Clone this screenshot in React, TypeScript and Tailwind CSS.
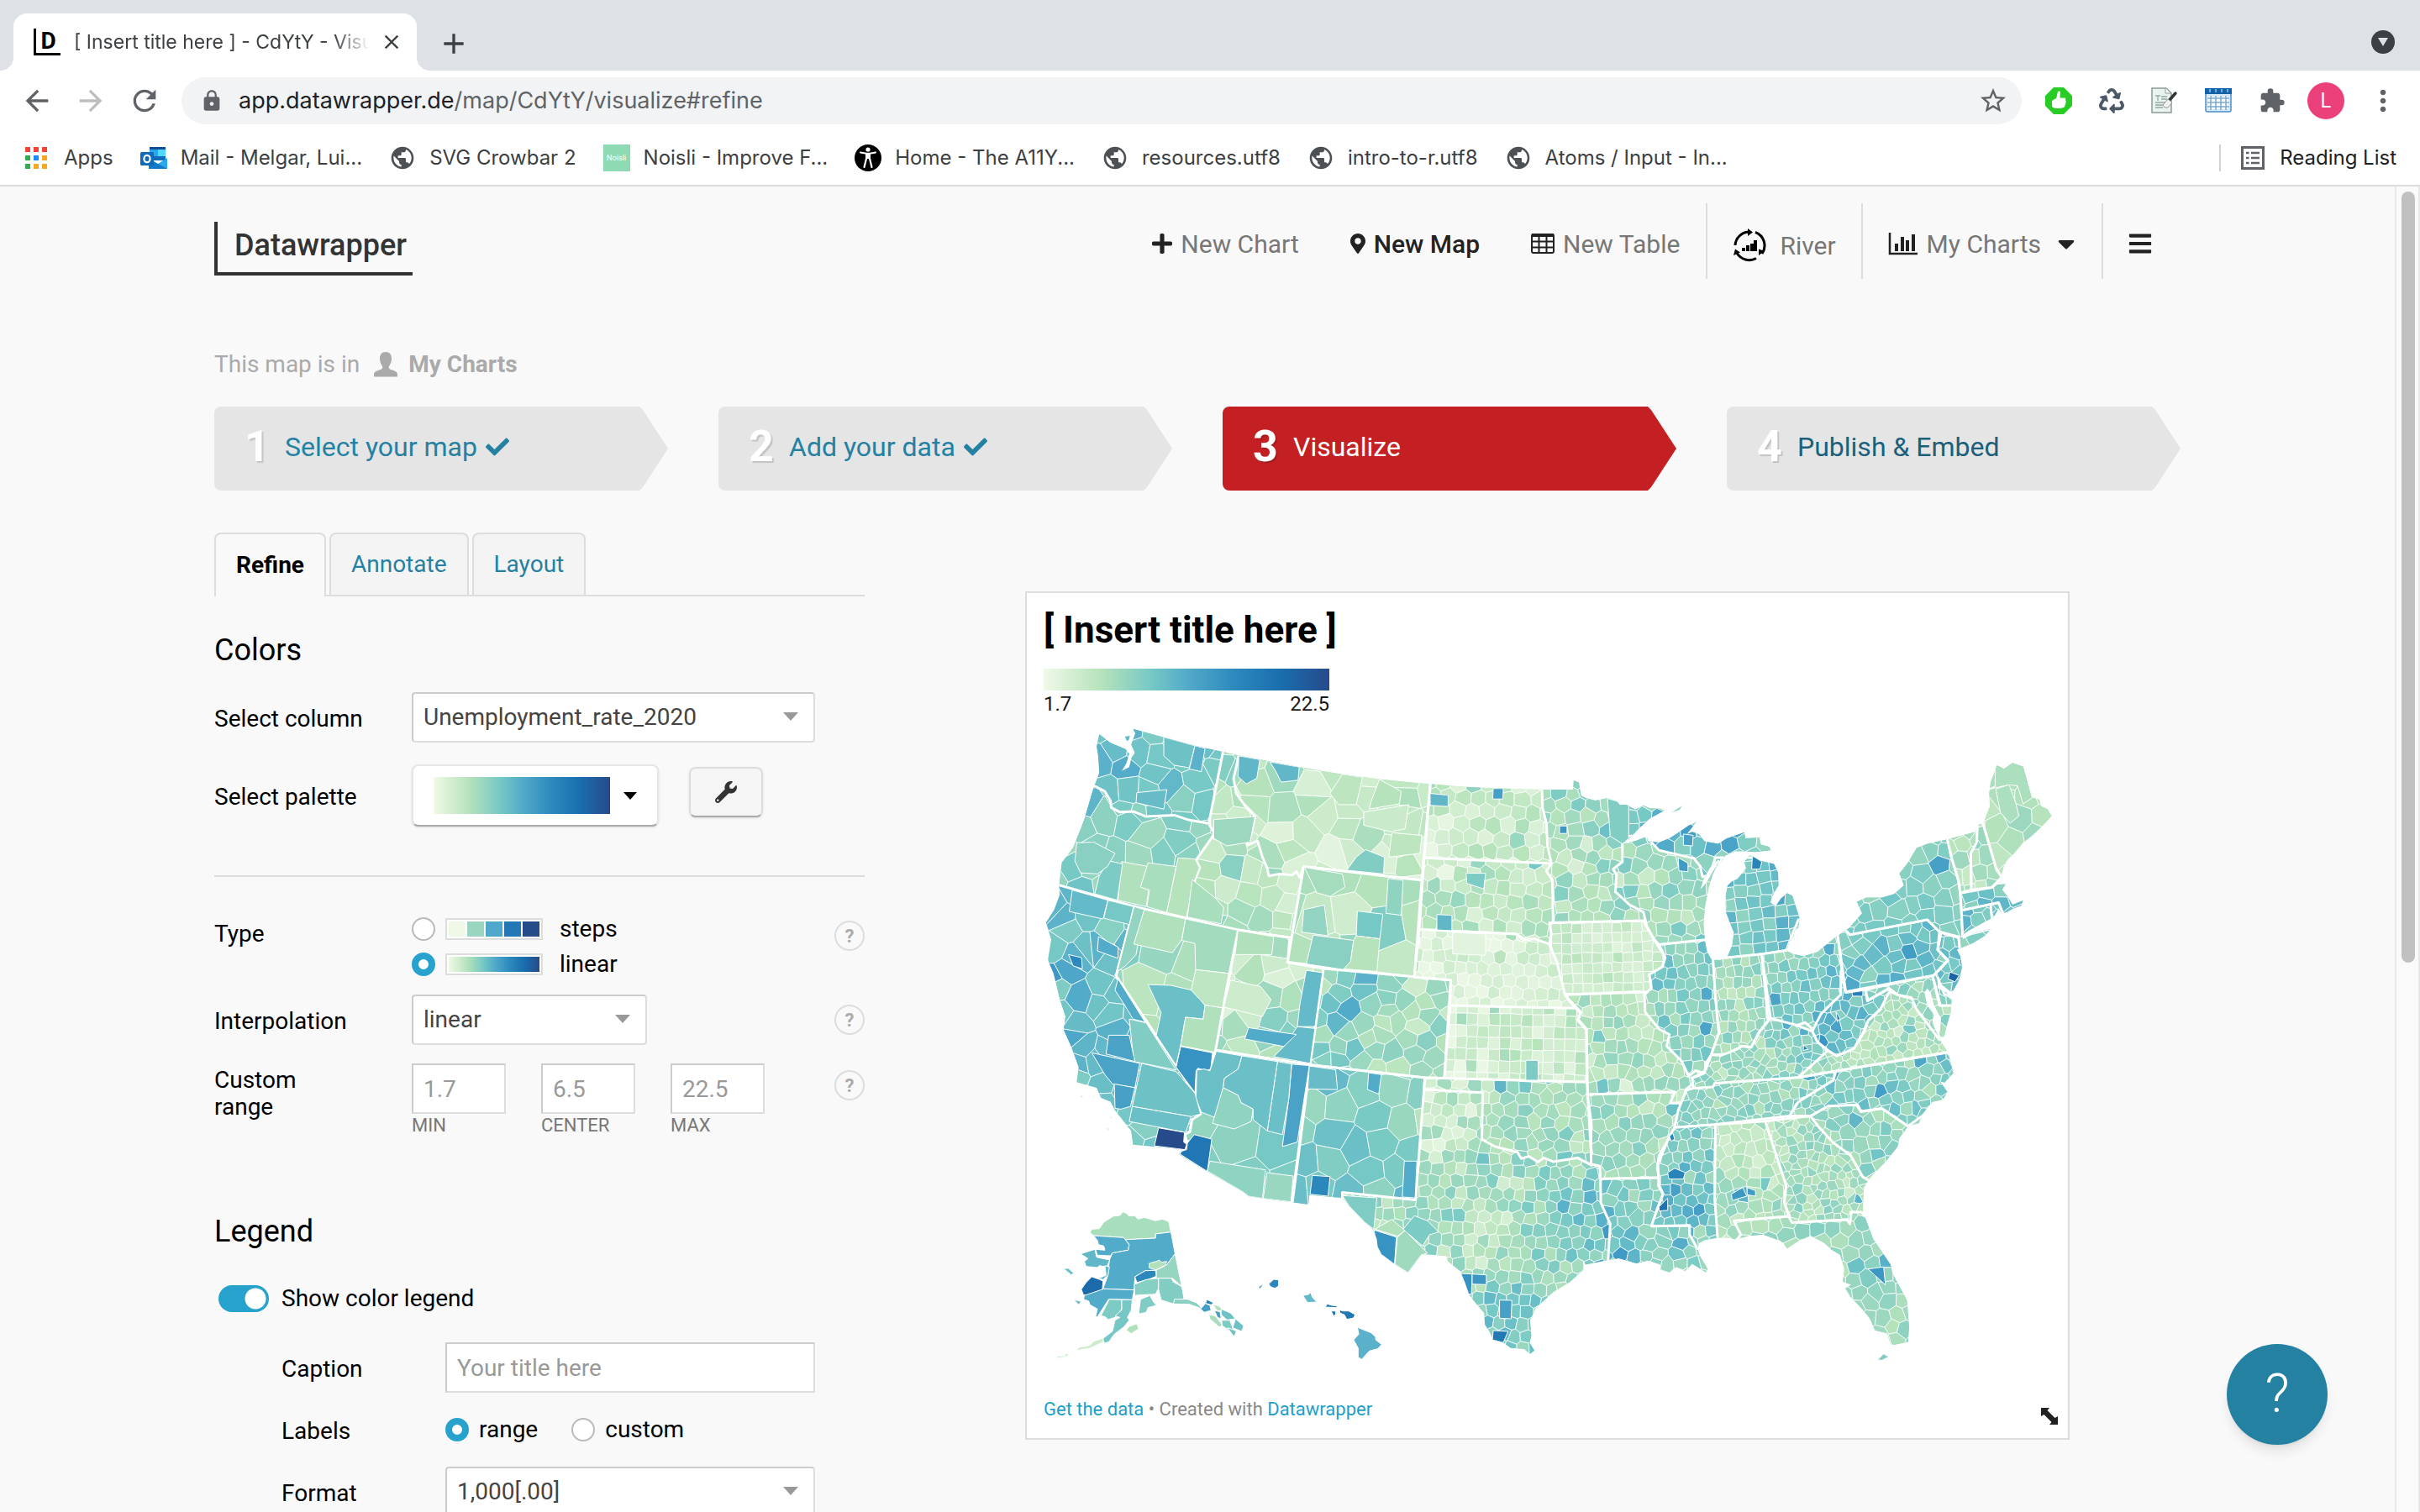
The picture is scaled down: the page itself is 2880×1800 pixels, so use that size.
import React from "react";
import { FaBars, FaCaretDown, FaCheck, FaMapMarkerAlt, FaPlus, FaRecycle, FaWrench } from "react-icons/fa";
import { MdAdd, MdArrowBack, MdArrowForward, MdClose, MdExtension, MdLock, MdMoreVert, MdPublic, MdRefresh, MdStarBorder } from "react-icons/md";

/* ------------------------------------------------------------------ */
/* Choropleth map                                                      */
/* ------------------------------------------------------------------ */

type Pt = [number, number];

// Each survey sheet has its own origin and scale; everything is converted to map units.
const SHEETS: Record<string, (x: number, y: number) => Pt> = {
  W: (x, y) => [1210 + x / 2.24, 690 + y / 2.24],
  E: (x, y) => [1850 + x / 2.4123, 850 + y / 1.96],
  S: (x, y) => [1210 + x / 2.24, 1350 + y / 3],
};

function shape(...parts: string[]): Pt[] {
  return parts.flatMap((part) => {
    const convert = SHEETS[part[0]];
    return part
      .slice(2)
      .trim()
      .split(/\s+/)
      .map((pair) => {
        const [x, y] = pair.split(",").map(Number);
        return convert(x, y);
      });
  });
}

const toPath = (pts: Pt[]) => "M" + pts.map(([x, y]) => `${x.toFixed(1)},${y.toFixed(1)}`).join("L") + "Z";

const COUNTRY = shape(
  "W:213,445 220,412 250,435 290,452 300,465 292,490 280,510 300,500 306,475 315,462 305,440 316,410 310,398 390,420 475,443 550,459 592,469 675,485 753,500 868,519 967,532 1055,541 1102,545 1190,552 1268,556 1397,560 1483,560",
  "E:55,155 70,160 76,190 90,196 117,202 152,196 180,205 188,213 205,211 232,223 255,213 275,220 303,220 317,225 275,243 245,265 215,290 195,303 230,297 265,286 268,297 300,300 330,290 355,277 385,260 410,250 395,265 380,280 395,275 415,280 430,297 470,303 495,290 545,276 548,290 588,288 592,305 617,310 620,318 575,322 550,320 520,320 490,330 480,345 470,340 455,350 445,360 428,385 418,410 435,395 452,370 472,345 455,375 443,405 432,450 428,490 432,530 438,555 450,572 475,574 497,565 510,540 515,510 505,490 492,462 490,430 497,400 510,390 525,385 540,370 550,360 545,345 560,330 575,335 590,342 630,350 642,370 643,400 625,425 620,440 635,448 650,430 668,418 683,424 695,455 703,475 700,498 690,505 685,520 675,530 665,552 685,560 715,565 755,555 785,535 808,520 845,500 883,465 868,438 895,428 940,428 975,420 1003,400 990,372 1012,350 1040,312 1070,303 1125,293 1208,275 1215,257 1230,257 1250,215 1248,185 1252,160 1270,120 1290,128 1315,114 1345,123 1370,195 1392,200 1397,215 1415,222 1427,238 1405,258 1383,275 1362,290 1345,300 1320,325 1300,340 1290,355 1283,375 1285,388 1270,398 1295,397 1285,410 1300,425 1315,445 1345,435 1340,447 1315,455 1300,462 1285,465 1275,455 1260,475 1235,485 1190,505 1172,515 1172,525 1215,508 1252,502 1235,518 1200,535 1170,545 1155,550 1165,565 1170,590 1162,620 1145,645 1137,648 1110,630 1105,615 1098,610 1100,640 1125,650 1140,665 1138,695 1125,730 1118,755 1105,752 1110,710 1090,680 1080,650 1070,640 1062,650 1070,680 1088,700 1085,720 1100,750 1112,768 1130,790 1145,838 1120,860 1108,858 1128,882 1115,900 1085,905 1055,935 1047,955 1015,962 990,990 985,1010 950,1045 905,1083 888,1105 885,1160 915,1225 965,1285 970,1305 1012,1368 1018,1430 1015,1465 975,1472 965,1470 955,1445 920,1438 905,1410 885,1390 850,1360 835,1340 852,1332 828,1325 832,1295 820,1262 795,1250 775,1235 735,1217 700,1230 668,1247 650,1230 600,1215 560,1217 520,1226 495,1222 470,1222 430,1228 415,1235 410,1247 418,1265 440,1295 435,1303 395,1283 375,1300 350,1290 330,1303 305,1297 305,1285 270,1275 235,1282 185,1270 148,1275 90,1285 80,1275 85,1295 45,1325",
  "S:1430,565 1385,620 1368,665 1372,720 1367,745 1380,773 1368,786 1353,768 1317,764 1297,745 1270,735 1262,710 1248,680 1246,640 1215,590 1205,570 1195,530 1182,490 1150,455 1145,436 1095,430 1078,432 1043,495 1007,465 972,430 962,405 960,375 950,342 930,318 888,260 868,228 780,218 778,252 730,243 657,230 618,222 605,208 505,132 432,72 440,55 367,45 310,38",
  "W:305,1470 262,1415 250,1392 225,1382 213,1355 160,1340 165,1300 145,1245 125,1200 130,1165 115,1120 105,1078 98,1050 83,1015 92,960 78,915 100,880 115,840 113,815 120,755 150,715 180,640 205,555 220,552 208,548 220,515 217,470",
);

type State = { id: string; pts: Pt[]; w: number; h: number; jitter: number; value: number; spread: number };

const state = (id: string, w: number, h: number, jitter: number, value: number, spread: number, outline: string): State => ({
  id, w, h, jitter, value, spread, pts: shape(outline),
});

// Painted in order, so a later state trims the loose edge of an earlier one.
const STATES: State[] = [
  state("WA", 30, 26, 0.8, 0.4, 0.06, "W:150,380 560,380 560,660 150,660"),
  state("OR", 32, 28, 0.8, 0.34, 0.08, "W:150,560 210,552 235,565 250,590 252,608 275,620 310,618 345,632 420,628 455,640 512,650 560,650 560,920 450,920 90,810"),
  state("CA", 28, 24, 0.85, 0.4, 0.07, "W:90,808 313,872 265,1057 475,1370 490,1425 467,1440 462,1470 450,1480 445,1500 455,1505 450,1520 430,1580 200,1600 0,1500 0,785"),
  state("NV", 46, 50, 0.3, 0.22, 0.08, "W:313,872 590,934 527,1255 520,1305 510,1315 500,1303 480,1305 478,1360 475,1370 265,1057"),
  state("ID", 26, 24, 0.85, 0.24, 0.1, "W:550,459 512,650 527,678 478,748 488,768 475,800 452,903 590,934 728,955 800,955 800,400 560,400"),
  state("MT", 34, 28, 0.85, 0.19, 0.1, "W:592,469 578,530 585,570 610,605 635,632 625,680 612,695 615,708 642,697 655,740 668,770 672,790 700,785 735,788 745,778 755,795 765,765 1080,802 1102,545 1104,500 592,420"),
  state("WY", 42, 46, 0.5, 0.25, 0.09, "W:765,765 1080,802 1060,1060 722,1020"),
  state("UT", 34, 22, 0.7, 0.2, 0.1, "W:590,934 728,955 722,1020 818,1037 782,1294 530,1255"),
  state("AZ", 52, 50, 0.4, 0.32, 0.07, "W:530,1255 782,1294 733,1660 600,1700 400,1560 435,1530 455,1505 448,1480 462,1472 467,1440 490,1425 475,1385 478,1305 500,1303 510,1315 520,1305"),
  state("CO", 24, 17, 0.7, 0.31, 0.11, "W:818,1037 1157,1068 1140,1330 1088,1328 782,1294"),
  state("TX", 14, 14, 0.35, 0.27, 0.1, "W:840,1600 1060,1340 1750,1340 1750,2250 840,2250"),
  state("NM", 36, 32, 0.5, 0.37, 0.08, "W:782,1294 1088,1328 1063,1654 868,1634 868,1700 730,1700"),
  state("MN", 17, 15, 0.45, 0.26, 0.1, "E:-60,100 330,100 330,500 -30,500"),
  state("WI", 17, 16, 0.4, 0.26, 0.11, "E:195,285 195,345 168,362 178,375 175,415 215,445 255,462 265,495 285,525 300,538 480,530 500,280"),
  state("MI", 15, 14, 0.2, 0.41, 0.08, "E:480,300 750,300 750,546 665,552 600,560 470,572 490,450 480,340"),
  state("MU", 20, 18, 0.5, 0.4, 0.1, "E:270,292 300,318 400,337 418,355 425,380 445,375 462,335 660,335 650,240 350,230 262,285"),
  state("IA", 12, 12, 0.15, 0.13, 0.06, "E:-14,487 255,482 265,497 285,525 318,568 310,590 272,608 278,640 260,655 245,648 28,655 10,600 -10,560"),
  state("MO", 14, 15, 0.45, 0.2, 0.1, "E:28,655 300,648 420,840 398,850 395,865 378,875 365,908 332,908 345,882 95,888 92,735 65,710 75,695"),
  state("ND", 18, 16, 0.25, 0.17, 0.09, "W:1103,545 1104,480 1397,500 1400,560 1402,610 1412,650 1415,710 1425,757 1086,742"),
  state("SD", 17, 16, 0.35, 0.18, 0.1, "W:1086,742 1425,757 1412,778 1428,800 1430,915 1420,915 1425,945 1420,972 1350,958 1330,945 1073,933"),
  state("NE", 14, 14, 0.25, 0.08, 0.06, "W:1073,933 1330,945 1355,960 1380,958 1420,972 1440,1020 1450,1060 1462,1108 1490,1145 1155,1136 1157,1068 1060,1060"),
  state("KS", 13, 14, 0.12, 0.13, 0.08, "W:1155,1136 1490,1143 1503,1155 1495,1175 1518,1200 1520,1340 1140,1330"),
  state("OK", 16, 14, 0.5, 0.27, 0.1, "W:1088,1328 1520,1340 1533,1562 1495,1542 1430,1552 1405,1542 1390,1553 1365,1538 1345,1544 1335,1527 1275,1512 1240,1493 1242,1368 1086,1360"),
  state("AR", 16, 15, 0.5, 0.26, 0.08, "E:95,888 345,882 332,908 365,908 350,945 345,965 330,990 300,1030 295,1060 300,1082 132,1085 130,1055 105,1050 105,950"),
  state("LA", 16, 14, 0.65, 0.31, 0.08, "E:132,1085 300,1082 298,1100 312,1120 295,1155 280,1195 388,1193 388,1215 412,1245 480,1330 150,1330 155,1255 160,1190 133,1140"),
  state("IL", 13, 14, 0.35, 0.33, 0.09, "E:300,538 318,568 310,590 272,608 278,640 258,655 260,695 300,735 330,748 322,775 365,810 385,845 405,832 430,838 435,815 450,795 472,745 462,660 455,572 455,525"),
  state("IN", 11, 13, 0.3, 0.24, 0.08, "E:455,572 595,560 613,715 585,745 565,778 535,775 515,795 450,795 472,745 462,660"),
  state("OH", 12, 13, 0.3, 0.31, 0.08, "E:595,560 665,552 700,480 808,480 825,600 822,655 780,690 765,720 745,738 720,720 690,728 620,710"),
  state("KY", 11, 10, 0.75, 0.28, 0.09, "E:450,795 475,797 500,790 540,775 565,778 590,740 620,710 690,725 740,740 755,765 785,785 745,820 700,848 460,862 455,872 400,875 395,850 430,838"),
  state("TN", 11, 12, 0.7, 0.32, 0.08, "E:400,873 455,870 460,862 700,848 808,833 800,855 740,885 695,910 675,938 460,958 345,965 355,925 378,878"),
  state("MS", 13, 13, 0.35, 0.36, 0.08, "E:345,965 462,958 460,1130 472,1230 480,1260 410,1247 388,1215 388,1193 278,1195 295,1155 312,1120 300,1100 297,1050 330,985"),
  state("AL", 14, 14, 0.6, 0.22, 0.08, "E:462,958 605,950 665,1100 660,1140 672,1172 518,1183 535,1215 520,1240 470,1240 460,1130"),
  state("GA", 10, 10, 0.75, 0.24, 0.08, "E:605,950 735,938 760,965 850,1030 885,1080 920,1085 900,1165 850,1162 850,1190 840,1180 680,1187 660,1140 665,1100"),
  state("FL", 18, 16, 0.5, 0.27, 0.06, "E:515,1183 672,1172 682,1187 840,1180 848,1190 852,1162 880,1162 1050,1300 1050,1500 900,1500 700,1280 500,1250 535,1215"),
  state("SC", 15, 14, 0.75, 0.28, 0.09, "E:735,938 785,915 865,910 880,928 940,920 1015,962 1020,1000 905,1090 885,1080 850,1030 800,1000 760,965"),
  state("NC", 13, 13, 0.7, 0.32, 0.08, "E:675,938 700,905 740,885 800,855 808,833 1128,790 1200,850 1015,962 940,920 880,927 870,912 785,915 735,938"),
  state("VA", 11, 10, 0.75, 0.22, 0.08, "E:700,848 785,785 810,798 860,780 890,740 900,715 935,690 955,645 985,655 1030,665 1100,740 1180,782 808,833"),
  state("WV", 13, 12, 0.75, 0.42, 0.09, "E:822,600 836,650 892,643 898,670 950,645 975,640 960,650 935,690 900,715 885,745 860,780 810,798 785,785 755,765 740,740 765,700 800,672 822,655"),
  state("MD", 14, 12, 0.7, 0.28, 0.08, "E:892,643 1085,610 1105,680 1150,678 1130,760 1105,760 1040,690 1025,662 985,655 960,640 900,668"),
  state("DE", 16, 14, 0.5, 0.36, 0.06, "E:1085,610 1098,605 1110,640 1160,680 1108,680"),
  state("PA", 18, 15, 0.7, 0.38, 0.07, "E:810,500 845,497 848,515 1070,480 1105,508 1100,550 1128,575 1088,610 836,648"),
  state("NJ", 14, 13, 0.6, 0.4, 0.06, "E:1110,510 1160,522 1165,550 1200,560 1180,650 1120,655 1095,605 1130,575 1100,550"),
  state("NY", 20, 19, 0.7, 0.35, 0.05, "E:848,515 820,490 980,250 1128,285 1138,330 1160,390 1165,420 1168,460 1172,515 1280,480 1270,520 1165,560 1160,520 1105,508 1070,480"),
  state("CT", 18, 16, 0.4, 0.4, 0.06, "E:1168,458 1252,443 1260,500 1172,518"),
  state("RI", 10, 12, 0.4, 0.42, 0.06, "E:1252,443 1275,440 1290,470 1258,500"),
  state("MA", 18, 16, 0.4, 0.4, 0.08, "E:1165,418 1255,405 1285,385 1400,380 1400,500 1290,470 1275,440 1168,458"),
  state("VT", 16, 18, 0.5, 0.22, 0.07, "E:1125,285 1215,265 1212,300 1195,325 1197,410 1165,418 1160,390 1140,335"),
  state("NH", 16, 20, 0.5, 0.26, 0.08, "E:1215,245 1230,255 1270,365 1285,380 1255,405 1197,410 1195,325 1212,300"),
  state("ME", 26, 28, 0.6, 0.22, 0.05, "E:1230,255 1230,100 1450,100 1450,320 1290,390 1268,360"),
];

// Regional highs and lows: x, y, radius, change in value.
const REGIONS: [number, number, number, number][] = [
  [1318, 1240, 60, 0.1], [1310, 920, 60, 0.05], [1280, 1130, 50, 0.05], [1430, 1120, 70, -0.04],
  [1550, 1120, 70, -0.06], [1570, 1215, 50, 0.1], [1500, 920, 40, 0.12], [1690, 1220, 60, -0.12], [1625, 1180, 40, 0.06],
  [1720, 1330, 60, -0.14], [1760, 1480, 70, -0.08], [1790, 1570, 50, 0.14], [1890, 1440, 50, 0.1], [1910, 1490, 50, 0.1],
  [1925, 940, 70, 0.07], [1850, 1020, 60, -0.06], [1960, 960, 50, 0.1], [2050, 970, 60, 0.08], [2000, 1090, 40, -0.06],
  [1990, 1430, 30, 0.1], [2060, 1420, 25, 0.14], [2070, 1350, 40, -0.06], [2140, 1210, 50, 0.08], [2180, 1160, 50, 0.05],
  [2120, 1070, 60, 0.02], [2275, 1125, 50, 0.03], [2240, 1330, 40, 0.05], [2240, 1530, 40, 0.05], [2160, 1260, 40, 0.05],
  [2340, 1290, 50, 0.03], [1690, 1020, 50, -0.07], [2010, 1130, 40, 0.05], [1640, 950, 50, -0.05], [1340, 1010, 40, -0.05],
];

const STOPS: [number, number, number, number][] = [
  [0, 240, 249, 232], [0.2, 182, 227, 187], [0.4, 117, 200, 197], [0.5, 83, 171, 202], [0.66, 46, 139, 190], [0.83, 26, 110, 174], [1, 38, 74, 138],
];

function ramp(value: number) {
  const v = Math.min(1, Math.max(0.02, value));
  let i = 1;
  while (i < STOPS.length - 1 && STOPS[i][0] < v) i++;
  const [a, b] = [STOPS[i - 1], STOPS[i]];
  const t = (v - a[0]) / (b[0] - a[0]);
  return `rgb(${[1, 2, 3].map((k) => Math.round(a[k] + (b[k] - a[k]) * t)).join(",")})`;
}

function random(seed: number) {
  let s = seed >>> 0;
  return () => {
    s = (s + 0x6d2b79f5) >>> 0;
    let t = s;
    t = Math.imul(t ^ (t >>> 15), t | 1);
    t ^= t + Math.imul(t ^ (t >>> 7), t | 61);
    return ((t ^ (t >>> 14)) >>> 0) / 4294967296;
  };
}

function inside([x, y]: Pt, poly: Pt[]) {
  let hit = false;
  for (let i = 0, j = poly.length - 1; i < poly.length; j = i++) {
    const [xi, yi] = poly[i];
    const [xj, yj] = poly[j];
    if (yi > y !== yj > y && x < ((xj - xi) * (y - yi)) / (yj - yi) + xi) hit = !hit;
  }
  return hit;
}

// Keep the part of a cell that lies nearer to a than to b.
function cut(cell: Pt[], a: Pt, b: Pt): Pt[] {
  const nx = b[0] - a[0];
  const ny = b[1] - a[1];
  const c = (nx * (a[0] + b[0]) + ny * (a[1] + b[1])) / 2;
  const out: Pt[] = [];
  cell.forEach((p, i) => {
    const q = cell[(i + 1) % cell.length];
    const dp = nx * p[0] + ny * p[1] - c;
    const dq = nx * q[0] + ny * q[1] - c;
    if (dp <= 0) out.push(p);
    if (dp * dq < 0) {
      const t = dp / (dp - dq);
      out.push([p[0] + (q[0] - p[0]) * t, p[1] + (q[1] - p[1]) * t]);
    }
  });
  return out;
}

function counties(s: State, seed: number) {
  const rnd = random(seed * 7919 + 13);
  const xs = s.pts.map((p) => p[0]);
  const ys = s.pts.map((p) => p[1]);
  const cx = (Math.min(...xs) + Math.max(...xs)) / 2;
  const cy = (Math.min(...ys) + Math.max(...ys)) / 2;
  const r = Math.hypot(Math.max(...xs) - cx, Math.max(...ys) - cy);
  const angle = ((1860 - cx) * 0.026 * Math.PI) / 180;
  const [cos, sin] = [Math.cos(angle), Math.sin(angle)];
  const nx = Math.ceil(r / s.w) + 2;
  const ny = Math.ceil(r / s.h) + 2;
  const grid: Pt[][] = [];
  for (let j = -ny; j <= ny; j++) {
    const row: Pt[] = [];
    for (let i = -nx; i <= nx; i++) {
      const offset = s.jitter > 0.2 && j % 2 ? 0.3 : 0;
      const u = (i + offset + (rnd() - 0.5) * s.jitter) * s.w;
      const v = (j + (rnd() - 0.5) * s.jitter) * s.h;
      row.push([cx + u * cos - v * sin, cy + u * sin + v * cos]);
    }
    grid.push(row);
  }
  const cells: { d: string; fill: string }[] = [];
  for (let j = 2; j < grid.length - 2; j++) {
    for (let i = 2; i < grid[j].length - 2; i++) {
      const p = grid[j][i];
      const noise = (rnd() + rnd() - 1) * s.spread * 1.5;
      const spike = rnd() > 0.98 ? 0.15 : 0;
      const m = 3 * Math.max(s.w, s.h);
      if (p[0] < Math.min(...xs) - m || p[0] > Math.max(...xs) + m || p[1] < Math.min(...ys) - m || p[1] > Math.max(...ys) + m) continue;
      let cell: Pt[] = [[p[0] - m, p[1] - m], [p[0] + m, p[1] - m], [p[0] + m, p[1] + m], [p[0] - m, p[1] + m]];
      for (let dj = -2; dj <= 2; dj++) for (let di = -2; di <= 2; di++) if (di || dj) cell = cut(cell, p, grid[j + dj][i + di]);
      if (!cell.some((q) => inside(q, COUNTRY)) && !inside(p, COUNTRY)) continue;
      let value = s.value + noise + spike;
      for (const [x, y, radius, change] of REGIONS) {
        const d = Math.hypot(p[0] - x, p[1] - y) / radius;
        if (d < 1.6) value += change * Math.exp(-d * d * 1.2);
      }
      cells.push({ d: toPath(cell), fill: ramp(value) });
    }
  }
  return cells;
}

const DISTRICTS: [number, string][] = [
  [1, "W:378,1462 447,1474 445,1500 453,1506 448,1520 367,1510"],
  [0.78, "W:473,1480 520,1492 508,1578 435,1532 440,1524 453,1520 455,1503"],
  [0.62, "W:437,1245 522,1262 517,1305 505,1310 483,1303 478,1310 475,1368 425,1300"],
  [0.43, "W:350,1080 410,1082 467,1095 502,1135 497,1172 450,1167 437,1240 425,1295 372,1215 385,1155"],
  [0.31, "W:340,880 313,872 268,1045 290,1030 318,1000"],
  [0.22, "W:340,880 450,905 440,960 415,995 312,972"],
  [0.26, "W:450,905 588,935 565,1050 477,1040 475,970 440,962"],
  [0.17, "W:565,1050 477,1040 465,1095 502,1135 548,1142"],
  [0.22, "W:450,1167 497,1172 502,1135 548,1142 527,1260 437,1243"],
  [0.54, "W:733,1292 780,1296 748,1500 708,1512 725,1385"],
  [0.43, "W:695,1285 733,1292 725,1385 708,1480 668,1470"],
  [0.43, "W:600,1270 695,1285 668,1470 630,1440 630,1412 598,1395 590,1375 550,1355 553,1330 590,1305"],
  [0.43, "W:532,1258 600,1270 590,1305 553,1330 550,1355 530,1435 492,1420 478,1385 480,1308 500,1305 515,1310"],
  [0.32, "W:550,1355 590,1375 598,1395 630,1412 625,1445 580,1465 522,1450"],
  [0.42, "W:333,1290 425,1312 475,1370 490,1425 465,1432 308,1405"],
  [0.43, "W:308,1405 465,1432 450,1474 300,1445"],
  [0.54, "W:200,1262 328,1290 315,1355 255,1345 235,1320"],
  [0.55, "W:260,1345 315,1355 303,1405 278,1412 262,1410"],
  [0.36, "W:300,1172 345,1182 425,1308 312,1285"],
  [0.54, "W:245,1215 300,1215 315,1285 238,1265"],
  [0.5, "W:270,1065 342,1180 310,1172 285,1130 262,1095"],
  [0.22, "W:280,752 350,765 330,820 352,828 345,872 270,855"],
  [0.24, "W:350,755 425,765 400,888 347,872 354,828 330,820"],
  [0.2, "W:430,742 475,745 487,768 472,808 452,900 400,888"],
  [0.38, "W:245,750 282,758 268,855 208,838 220,790"],
  [0.34, "W:160,702 205,700 262,730 242,765 215,785 170,782 155,750"],
  [0.45, "W:148,828 243,855 230,905 140,885"],
  [0.4, "W:243,855 311,872 300,920 232,903"],
  [0.42, "W:392,420 475,443 460,502 420,495 392,470"],
  [0.24, "W:468,800 530,850 552,875 545,918 455,900"],
  [0.28, "W:525,640 635,632 622,700 560,710 525,690"],
  [0.45, "W:748,1192 795,1197 782,1290 685,1272 712,1245"],
  [0.5, "W:618,1195 745,1213 712,1245 608,1225"],
  [0.45, "W:772,1042 815,1048 795,1192 748,1192 755,1130"],
  [0.22, "W:590,936 685,952 680,1000 582,1000"],
  [0.12, "W:570,1068 650,1085 678,1120 655,1165 552,1140"],
  [0.34, "W:790,948 898,962 890,1018 872,1040 772,1025"],
  [0.4, "W:908,884 976,892 968,958 905,950"],
  [0.31, "W:765,880 820,868 830,950 760,940"],
  [0.25, "W:767,767 868,785 875,820 835,845 800,835"],
  [0.2, "W:905,950 968,958 960,1045 872,1038 890,1018 898,962"],
  [0.32, "W:990,797 1030,802 1025,895 984,890"],
  [0.46, "W:592,470 648,480 640,530 612,545 590,525"],
  [0.46, "W:675,486 753,500 750,535 705,540 690,510"],
  [0.18, "W:868,519 922,527 905,600 858,600 835,570"],
  [0.2, "W:967,533 1025,565 1020,598 940,612 945,590"],
  [0.13, "W:925,620 1045,600 1035,665 995,672 925,655"],
  [0.36, "W:930,720 980,740 978,785 880,775 905,740"],
  [0.18, "W:1000,675 1080,682 1075,730 992,740"],
  [0.48, "W:475,443 502,450 492,512 460,505"],
  [0.44, "W:320,568 400,560 392,612 318,595"],
  [0.56, "W:1270,557 1297,557 1296,585 1269,585"],
  [0.46, "W:1102,570 1150,575 1150,605 1102,602"],
  [0.46, "W:1120,893 1160,895 1160,936 1120,934"],
  [0.38, "W:1198,783 1250,783 1245,825 1200,810"],
  [0.05, "W:1162,941 1250,945 1250,1002 1162,998"],
  [0.6, "W:1447,657 1467,657 1467,677 1447,677"],
  [0.67, "W:138,1000 173,1008 175,1038 150,1030"],
  [0.5, "W:218,952 270,980 270,1010 215,990"],
  [0.5, "W:938,1315 972,1320 965,1372 935,1360"],
  [0.44, "W:780,1297 850,1307 855,1360 776,1358"],
  [0.38, "W:1357,1282 1390,1282 1390,1335 1357,1335"],
  [0.68, "S:788,148 835,152 830,222 782,215"],
  [0.5, "S:1033,97 1067,97 1062,228 1028,225"],
  [0.32, "S:515,97 663,128 655,230 618,222 605,208 508,132"],
  [0.29, "S:667,138 737,150 731,242 657,230"],
  [0.62, "S:952,343 1012,368 1007,465 972,430 962,405"],
  [0.22, "S:1000,305 1035,345 1015,365 955,340"],
  [0.27, "S:1015,368 1035,345 1095,425 1078,432 1043,495 1008,465"],
  [0.37, "S:868,220 960,228 952,340 930,318 888,260"],
  [0.38, "S:1060,292 1095,310 1125,350 1100,360 1082,400 1030,340"],
  [0.62, "S:1184,498 1214,500 1212,572 1205,572"],
  [0.6, "S:1214,500 1252,503 1252,538 1214,536"],
  [0.76, "S:1270,702 1310,705 1297,745 1268,735"],
  [0.55, "S:1287,593 1320,594 1318,660 1287,658"],
  [0.36, "E:152,197 213,212 213,290 195,303 160,285"],
  [0.7, "E:568,330 595,345 590,362 566,362"],
  [0.58, "E:355,335 383,348 383,368 357,366"],
  [0.55, "E:370,280 398,283 396,308 370,306"],
  [0.88, "E:1135,602 1162,610 1150,625 1130,618"],
  [0.6, "E:900,1295 945,1290 950,1332"],
  [0.7, "E:325,1070 345,1060 375,1070 370,1085 328,1085"],
  [0.8, "E:300,1150 325,1130 325,1158 300,1160"],
  [0.7, "E:330,985 340,978 345,992 335,997"],
  [0.6, "E:508,1120 540,1105 552,1125 510,1135"],
  [0.58, "E:553,1105 577,1112 577,1125 553,1122"],
  [0.72, "E:808,695 820,710 812,718"],
  [0.72, "E:715,772 728,782 714,785"],
  [0.23, "E:1250,175 1265,170 1265,100 1345,100 1372,195 1345,210 1330,168 1305,165"],
  [0.23, "E:1267,175 1305,165 1325,210 1333,238 1308,255 1280,230"],
];

const OUTLIERS: [number, string][] = [
  [0.24, "S:195,352 200,340 220,338 232,315 258,293 275,291 283,278 295,285 298,292 315,292 323,304 340,298 370,310 388,304 405,313 411,350 370,357 370,372 290,377 285,370 205,363"],
  [0.5, "S:205,363 285,370 300,395 297,415 255,425 250,435 215,433 210,412 235,415 232,400 218,395 215,380"],
  [0.5, "S:290,377 370,372 370,357 411,350 422,428 400,467 370,487 343,488 315,510 313,557 230,553 243,505 247,450 255,425 297,415 300,395"],
  [0.46, "S:170,428 208,412 213,440 248,450 240,475 220,470 215,477 185,473 180,455 190,445"],
  [0.43, "S:124,480 138,480 152,497 145,503"],
  [0.45, "S:235,470 247,475 243,505 230,520 218,515 238,505"],
  [0.85, "S:200,510 218,518 230,525 228,560 208,565 205,575 178,575 172,555 185,530"],
  [0.5, "S:180,577 232,553 313,557 308,592 245,590 215,653 210,653 215,625 195,610 192,597 178,590"],
  [0.38, "S:247,590 280,592 280,625 262,655 243,663 238,655 225,648"],
  [0.4, "S:280,592 308,592 305,630 295,655 300,665 285,690 260,715 245,743 232,747 230,730 255,705 262,665 275,655 262,650 280,628"],
  [0.68, "S:315,510 343,488 370,487 372,508 350,520 320,530"],
  [0.35, "S:313,538 345,520 378,515 378,550 370,572 325,575 315,577"],
  [0.22, "S:353,462 372,455 380,450 385,458 400,455 395,470 370,485 353,478"],
  [0.3, "S:422,428 440,545 428,530 415,515 372,515 372,487 400,467"],
  [0.36, "S:378,515 412,515 417,528 440,545 446,588 425,593 418,607 385,593 378,555"],
  [0.37, "S:330,590 355,577 365,600 372,612 350,620 345,637 325,643"],
  [0.22, "S:300,687 320,678 325,695 305,713 292,700"],
  [0.12, "S:228,730 232,742 195,765 160,773 165,762 195,755 205,740"],
  [0.12, "S:97,806 110,793 130,792 128,782 140,787 130,797 105,800"],
  [0.34, "S:420,590 455,590 480,603 495,625 460,608 418,607"],
  [0.7, "S:507,591 525,603 518,610 503,605"],
  [0.57, "S:503,605 515,612 518,630 500,637 490,625"],
  [0.22, "S:522,608 540,615 550,630 535,632"],
  [0.55, "S:527,630 542,635 545,660 535,655"],
  [0.24, "S:512,645 530,650 548,682 540,690 515,660"],
  [0.42, "S:545,625 570,640 583,660 560,664 545,645"],
  [0.38, "S:546,665 568,665 575,690 580,715 565,700 548,685"],
  [0.42, "S:583,660 605,685 600,705 576,692"],
  [0.42, "S:562,692 585,703 583,715 578,722"],
  [0.45, "S:152,592 172,598 165,610"],
  [0.6, "S:645,545 658,535 648,555"],
  [0.68, "S:672,535 685,519 698,521 698,543 688,551 676,545"],
  [0.45, "S:763,577 778,573 783,565 788,583 800,600 775,602"],
  [0.75, "S:828,607 840,612 857,614 850,620 822,618"],
  [0.78, "S:838,632 850,632 850,645 845,650"],
  [0.77, "S:860,628 870,632 885,632 902,645 898,657 880,662 873,645 862,640"],
  [0.48, "S:908,690 920,697 945,710 957,725 957,735 973,752 962,767 940,775 920,805 910,797 910,765 898,735 912,715"],
  [0.34, "E:335,230 368,212 360,224 340,230"],
  [0.36, "E:927,1507 945,1493 960,1500 940,1508"],
  [0.45, "W:287,418 303,415 300,428 293,432"],
  [0.45, "W:247,1427 256,1437 250,1435"],
  [0.45, "W:240,1455 247,1470 242,1467"],
  [0.36, "W:168,1375 180,1380 172,1381"],
];

function UnemploymentMap() {
  const states = React.useMemo(() => STATES.map((s, i) => ({ id: s.id, d: toPath(s.pts), cells: counties(s, i + 1) })), []);
  return (
    <svg viewBox="1222 862 1239 780" className="block w-full" role="img" aria-label="Unemployment rate by county, 2020">
      <defs>
        <clipPath id="country"><path d={toPath(COUNTRY)} /></clipPath>
        {states.map((s) => <clipPath id={`state-${s.id}`} key={s.id}><path d={s.d} /></clipPath>)}
      </defs>
      <g clipPath="url(#country)">
        <path d={toPath(COUNTRY)} fill="#9ad6c0" />
        {states.map((s) => (
          <g key={s.id}>
            <g clipPath={`url(#state-${s.id})`} stroke="#fff" strokeWidth="1" strokeOpacity="0.8">
              {s.cells.map((c, i) => <path key={i} d={c.d} fill={c.fill} />)}
            </g>
            <path d={s.d} fill="none" stroke="#fff" strokeWidth="3" strokeLinejoin="round" />
          </g>
        ))}
        {DISTRICTS.map(([v, o], i) => <path key={i} d={toPath(shape(o))} fill={ramp(v)} stroke="#fff" strokeWidth="1" />)}
      </g>
      {OUTLIERS.map(([v, o], i) => <path key={i} d={toPath(shape(o))} fill={ramp(v)} stroke="#fff" strokeWidth="1" />)}
    </svg>
  );
}

/* ------------------------------------------------------------------ */
/* Icons                                                               */
/* ------------------------------------------------------------------ */

function OutlookIcon() {
  return (
    <svg viewBox="0 0 32 28" className="h-7 w-8">
      <path fill="#0f4c94" d="M11 1h19v5H11z" />
      <path fill="#28a8ea" d="M11 4h10v10H11z" />
      <path fill="#50d9ff" d="M21 4h9v10h-9z" />
      <path fill="#0f6cbd" d="M11 12h19v5H11z" />
      <path fill="#28a8ea" d="M10 15l11 6 11-7v13H10z" />
      <path fill="#1278c9" d="M10 15l22 12H10z" />
      <rect x="0" y="7" width="16" height="16" rx="1.5" fill="#0f6cbd" />
      <ellipse cx="8" cy="15" rx="3.6" ry="4.2" fill="none" stroke="#fff" strokeWidth="2.2" />
    </svg>
  );
}

function PersonBadge() {
  return (
    <svg viewBox="0 0 32 32" className="h-8 w-8">
      <circle cx="16" cy="16" r="16" />
      <circle cx="16" cy="6" r="2.6" fill="#fff" />
      <path d="M7 9.500l7 1.300h4l7-1.300" fill="none" stroke="#fff" strokeWidth="2" strokeLinecap="round" />
      <path d="M13 10h6v7H13z" fill="#fff" />
      <path d="M14.200 16l-2.700 11M17.800 16l2.700 11" fill="none" stroke="#fff" strokeWidth="2.200" strokeLinecap="round" />
    </svg>
  );
}

function ThumbIcon() {
  return (
    <svg viewBox="0 0 32 32" className="h-8 w-8">
      <path fill="#29cc25" d="M10 0h12l10 10v12L22 32H10L0 22V10z" />
      <path fill="#fff" d="M8 16l5-3c1-2 1-5 2-8 1-1 3-.5 3 1l-.5 6.500h5c2 0 2.500 2 1.500 3 1 1 1 2.500 0 3.200.6 1.200.2 2.300-.8 2.900.3 1.500-.5 2.400-2 2.400-2 1-9 1.500-11.500 0L8 23z" />
    </svg>
  );
}

function NoteIcon() {
  return (
    <svg viewBox="0 0 32 34" className="h-[34px] w-8">
      <path d="M1 2h17l6 6v23H1z" fill="#e9f3ef" stroke="#8d9b97" strokeWidth="1.500" />
      <path d="M17 2v6h6" fill="#fff" stroke="#8d9b97" />
      <path d="M5 11h6M8 11v6M12 12h7M12 15h7M5 19h13M5 22h13M5 25h9" stroke="#93aaa2" strokeWidth="1.300" fill="none" />
      <path d="M29 8l-8 9" stroke="#333" strokeWidth="3.500" strokeLinecap="round" />
      <path d="M20 15l5 4-5 6h-4l-2-3z" fill="#f2f2f2" stroke="#999" />
    </svg>
  );
}

function SheetIcon() {
  return (
    <svg viewBox="0 0 32 30" className="h-[30px] w-8">
      <rect x="1" y="1" width="30" height="27" rx="2" fill="#d6e9f8" stroke="#4a8fc7" strokeWidth="1.500" />
      <path d="M0 0h32v7H0z" fill="#1461a8" />
      <path d="M6 1v4M13 1v4M20 1v4M27 1v4" stroke="#8cc4ee" strokeWidth="1.500" />
      <path d="M4 10h24v15H4z" fill="#fff" />
      <path d="M3 12h26M3 17h26M3 22h26M7 9v17M13 9v17M19 9v17M25 9v17" stroke="#7aa9d2" strokeWidth="1.500" />
    </svg>
  );
}

function ReadingListIcon() {
  return (
    <svg viewBox="0 0 28 28" className="h-7 w-7" fill="none" stroke="#5f6368">
      <rect x="1.500" y="1.500" width="25" height="25" strokeWidth="3" />
      <path d="M6 8h3.500M12 8h10M6 14h3.500M12 14h10M6 20h3.500M12 20h10" strokeWidth="2.600" />
    </svg>
  );
}

function TableIcon() {
  return (
    <svg viewBox="0 0 28 26" className="h-[26px] w-7" fill="none" stroke="#222" strokeWidth="2">
      <rect x="1" y="2" width="26" height="22" rx="2" />
      <path d="M1 3h26" strokeWidth="4" />
      <path d="M1 10.500h26M1 17.500h26M9.500 3v21M18.500 3v21" />
    </svg>
  );
}

function RiverIcon() {
  return (
    <svg viewBox="0 0 40 40" className="h-10 w-10" fill="none" stroke="#000" strokeWidth="3">
      <path d="M3 20A17 17 0 0 1 19 4M27 4.500A17 17 0 0 1 35 30M28 35.500A17 17 0 0 1 5 29" />
      <path d="M18 0l6 4.500-6 4.500zM38 27l-7 5 0-7.500zM1 32l2-7.500 6 4z" fill="#000" stroke="none" />
      <path d="M13 27v-4M18 27v-7M23 27v-9M27 27V14" strokeWidth="4" />
    </svg>
  );
}

function ChartIcon() {
  return (
    <svg viewBox="0 0 36 28" className="h-7 w-9" fill="none" stroke="#222">
      <path d="M2 1v25h33" strokeWidth="2.500" />
      <path d="M10 23v-9M17 23V6M23 23V10M30 23V3" strokeWidth="4" />
    </svg>
  );
}

function UserIcon() {
  return (
    <svg viewBox="0 0 30 30" className="h-[30px] w-[30px]" fill="#aaa">
      <path d="M15 0c5 0 7 3.500 7 8s-2 7-3 9c-.8 2 0 3 2 4 5 1.500 8 2.500 8 6v2.500H1V27c0-3.500 3-4.500 8-6 2-1 2.800-2 2-4-1-2-3-4.500-3-9s2-8 7-8z" />
    </svg>
  );
}

function ResizeIcon() {
  return (
    <svg viewBox="0 0 20 20" className="h-5 w-5" fill="#222">
      <path d="M0 0h10L7.500 3l9 9L20 10v10H10l2.500-3-9-9L0 10z" />
    </svg>
  );
}

/* ------------------------------------------------------------------ */
/* Browser frame                                                       */
/* ------------------------------------------------------------------ */

const globe = <MdPublic className="h-8 w-8 text-[#4d5156]" />;
const appColors = ["bg-[#f44336]", "bg-[#f44336]", "bg-[#f44336]", "bg-[#34a853]", "bg-[#1a8cff]", "bg-[#f5a623]", "bg-[#34a853]", "bg-[#f5a623]", "bg-[#f5a623]"];

const BOOKMARKS: { label: string; icon: React.ReactNode }[] = [
  { label: "Apps", icon: <span className="mr-1 grid grid-cols-3 gap-1">{appColors.map((c, i) => <i key={i} className={`h-1.5 w-1.5 ${c}`} />)}</span> },
  { label: "Mail - Melgar, Lui...", icon: <OutlookIcon /> },
  { label: "SVG Crowbar 2", icon: globe },
  { label: "Noisli - Improve F...", icon: <span className="flex h-8 w-8 items-center justify-center bg-[#8edbb3] text-[9px] text-white">Noisli</span> },
  { label: "Home - The A11Y...", icon: <PersonBadge /> },
  { label: "resources.utf8", icon: globe },
  { label: "intro-to-r.utf8", icon: globe },
  { label: "Atoms / Input - In...", icon: globe },
];

function BrowserChrome() {
  return (
    <div className="shrink-0 bg-white font-[Inter,sans-serif] text-[#3c4043]">
      <div className="flex h-[84px] items-end bg-[#dee1e6] pl-4">
        <div className="relative flex h-[68px] w-[480px] items-center rounded-t-2xl bg-white pl-6 pr-4">
          <i className="absolute -left-4 bottom-0 h-4 w-4 bg-[radial-gradient(circle_at_0_0,transparent_16px,white_16px)]" />
          <i className="absolute -right-4 bottom-0 h-4 w-4 bg-[radial-gradient(circle_at_100%_0,transparent_16px,white_16px)]" />
          <span className="flex h-8 w-8 items-center justify-center border-b-[3px] border-l-[3px] border-black font-[Roboto,sans-serif] text-[28px] font-bold leading-none text-black">D</span>
          <span className="ml-4 flex-1 overflow-hidden whitespace-nowrap text-[23px] [mask-image:linear-gradient(90deg,#000_88%,transparent)]">[ Insert title here ] - CdYtY - Visualize</span>
          <button aria-label="Close tab" className="ml-3"><MdClose className="h-7 w-7" /></button>
        </div>
        <button aria-label="New tab" className="mb-4 ml-6 h-9"><MdAdd className="h-10 w-10" /></button>
        <button aria-label="Search tabs" className="mb-5 ml-auto mr-[30px] flex h-7 w-7 items-center justify-center rounded-full bg-[#3c4043]">
          <svg viewBox="0 0 12 10" className="h-2.5 w-3" fill="#dee1e6"><path d="M0 0h12L6 10z" /></svg>
        </button>
      </div>
      <div className="flex h-[72px] items-center px-6 text-[#5f6368]">
        <button aria-label="Back"><MdArrowBack className="h-10 w-10" /></button>
        <button aria-label="Forward" className="ml-6 text-[#bcbec0]"><MdArrowForward className="h-10 w-10" /></button>
        <button aria-label="Reload" className="ml-6"><MdRefresh className="h-10 w-10" /></button>
        <div className="ml-6 flex h-14 flex-1 items-center rounded-full bg-[#f1f3f4] pl-[22px] pr-4">
          <MdLock className="h-7 w-7" />
          <div className="ml-[18px] flex-1 text-[27px]"><span className="text-[#202124]">app.datawrapper.de</span>/map/CdYtY/visualize#refine</div>
          <button aria-label="Bookmark this page"><MdStarBorder className="h-9 w-9" /></button>
        </div>
        <div className="ml-7 flex items-center gap-8">
          <ThumbIcon />
          <FaRecycle className="h-[30px] w-[30px] text-[#4c5866]" />
          <NoteIcon />
          <SheetIcon />
          <MdExtension className="h-8 w-8" />
          <span className="-mx-1.5 flex h-11 w-11 items-center justify-center rounded-full bg-[#ec407a] text-2xl text-white">L</span>
          <button aria-label="Menu"><MdMoreVert className="h-10 w-10" /></button>
        </div>
      </div>
      <div className="flex h-[66px] items-center gap-[32px] border-b-2 border-[#dadce0] pl-[30px] pr-7 text-2xl">
        {BOOKMARKS.map((b) => <a key={b.label} href="#bookmark" className="flex items-center gap-4">{b.icon}{b.label}</a>)}
        <a href="#reading" className="ml-auto flex h-8 items-center gap-[18px] border-l-2 border-[#d0d2d5] pl-6 text-[#202124]"><ReadingListIcon />Reading List</a>
      </div>
    </div>
  );
}

/* ------------------------------------------------------------------ */
/* Page                                                                */
/* ------------------------------------------------------------------ */

const GRADIENT = "bg-[linear-gradient(90deg,#f0f9e8_0%,#b6e3bb_20%,#75c8c5_38%,#53abca_50%,#2e8bbe_66%,#1a6eae_83%,#264a8a_100%)]";

function Header() {
  return (
    <header className="flex h-[90px] text-[30px] text-[#777]">
      <a href="#home" className="mt-[22px] flex h-16 w-[236px] items-center border-b-4 border-l-4 border-[#333] pb-1 pl-5 text-4xl font-medium text-[#333]">Datawrapper</a>
      <nav className="ml-auto flex">
        <a href="#chart" className="flex h-24 items-center gap-2.5 pr-[61px]"><FaPlus className="h-7 w-6 text-[#222]" />New Chart</a>
        <a href="#map" className="flex h-24 items-center gap-2.5 pr-[61px] font-medium text-[#222]"><FaMapMarkerAlt className="h-[26px] w-[18px]" />New Map</a>
        <a href="#table" className="flex h-24 items-center gap-2.5 pr-[31px]"><TableIcon />New Table</a>
        <a href="#river" className="flex h-[90px] items-center gap-4 border-l-2 border-[#ddd] px-[30px] pt-2.5"><RiverIcon />River</a>
        <a href="#charts" className="flex h-[90px] items-center gap-2.5 border-l-2 border-[#ddd] px-[30px] pt-1.5"><ChartIcon />My Charts<FaCaretDown className="ml-2 h-8 w-6 text-[#222]" /></a>
        <button aria-label="Menu" className="border-l-2 border-[#ddd] pl-[30px] pr-[34px] pt-1.5 text-[#222]"><FaBars className="h-[30px] w-7" /></button>
      </nav>
    </header>
  );
}

const STEPS = [
  { label: "Select your map", color: "bg-[#e5e5e5] text-[#2581a2]", done: true },
  { label: "Add your data", color: "bg-[#e5e5e5] text-[#2581a2]", done: true },
  { label: "Visualize", color: "bg-[#c42024] text-white", done: false },
  { label: "Publish & Embed", color: "bg-[#e5e5e5] text-[#1b607a]", done: false },
];

function Row({ label, forId, children, help = false, align = "items-center", labelWidth = "w-[235px]" }: { label: React.ReactNode; forId?: string; children: React.ReactNode; help?: boolean; align?: string; labelWidth?: string }) {
  return (
    <div className={`flex ${align}`}>
      <label htmlFor={forId} className={`shrink-0 pt-1 leading-8 ${labelWidth}`}>{label}</label>
      {children}
      {help && <button type="button" aria-label="Help" className="ml-auto flex h-9 w-9 items-center justify-center rounded-full border-2 border-[#ddd] text-[22px] font-bold text-[#aaa]">?</button>}
    </div>
  );
}

function Select({ id, value, width }: { id: string; value: string; width: string }) {
  return (
    <div className={`relative ${width}`}>
      <select id={id} defaultValue={value} className="h-[60px] w-full appearance-none rounded border-2 border-[#ddd] border-l-[#ccc] border-t-[#ccc] bg-white px-3 text-[#444]"><option>{value}</option></select>
      <svg viewBox="0 0 18 10" className="pointer-events-none absolute right-5 top-6 h-2.5 w-[18px]" fill="#999"><path d="M0 0h18L9 10z" /></svg>
    </div>
  );
}

const radio = "h-7 w-7 appearance-none rounded-full border-2 border-[#bbb] bg-white checked:border-8 checked:border-[#26a2cc]";
const box = "h-[60px] border-2 border-[#ddd] border-l-[#ccc] border-t-[#ccc] bg-white px-3 placeholder-[#999]";

function RefinePanel() {
  return (
    <form className="text-[28px] text-black">
      <h2 className="mt-10 text-4xl leading-[48px]">Colors</h2>
      <div className="mt-[26px]"><Row label="Select column" forId="column"><Select id="column" value="Unemployment_rate_2020" width="w-[480px]" /></Row></div>
      <div className="mt-[26px]">
        <Row label="Select palette">
          <button type="button" aria-label="Palette" className="flex h-[74px] w-[294px] items-center rounded-lg border-2 border-[#e6e6e6] border-b-[#aaa] bg-white px-6 shadow-sm">
            <span className={`h-11 w-[210px] ${GRADIENT}`} />
            <svg viewBox="0 0 16 9" className="ml-4 h-[9px] w-4"><path d="M0 0h16L8 9z" /></svg>
          </button>
          <button type="button" aria-label="Palette settings" className="mb-2 ml-9 flex h-[60px] w-[88px] items-center justify-center rounded-lg border-2 border-[#ddd] border-b-[#aaa] bg-[#f5f5f5] text-[#333] shadow-sm"><FaWrench className="h-[26px] w-[26px]" /></button>
        </Row>
      </div>
      <hr className="mt-[58px] border-t-2 border-[#ddd]" />
      <div className="mt-12">
        <Row label="Type" help align="items-start [&>button]:mt-1">
          <div className="grid gap-3.5 leading-7">
            <label className="flex items-center"><input type="radio" name="type" className={radio} />
              <span className="ml-3 mr-5 flex h-[26px] w-[116px] gap-0.5 border-2 border-[#ddd] bg-white p-0.5">
                <i className="flex-1 bg-[#f0f9e8]" /><i className="flex-1 bg-[#9ad5c0]" /><i className="flex-1 bg-[#4fa7cb]" /><i className="flex-1 bg-[#2378b5]" /><i className="flex-1 bg-[#264b89]" />
              </span>steps</label>
            <label className="flex items-center"><input type="radio" name="type" defaultChecked className={radio} />
              <span className="ml-3 mr-5 flex h-[26px] w-[116px] border-2 border-[#ddd] bg-white p-0.5"><i className={`flex-1 ${GRADIENT}`} /></span>linear</label>
          </div>
        </Row>
      </div>
      <div className="mt-[22px]"><Row label="Interpolation" forId="interpolation" help><Select id="interpolation" value="linear" width="w-[280px]" /></Row></div>
      <div className="mt-[22px]">
        <Row label={<>Custom<br />range</>} help align="items-start [&>button]:mt-2">
          <div className="flex gap-[42px]">
            {[["MIN", "1.7"], ["CENTER", "6.5"], ["MAX", "22.5"]].map(([name, value]) => (
              <label key={name} className="flex w-28 flex-col text-[22px] leading-7 text-[#777]"><input placeholder={value} className={`${box} w-28 text-[28px]`} />{name}</label>
            ))}
          </div>
        </Row>
      </div>
      <h2 className="mt-[88px] text-4xl leading-[48px]">Legend</h2>
      <label className="mt-10 flex h-8 items-center pl-[5px]">
        <input type="checkbox" role="switch" defaultChecked className="mr-[15px] h-8 w-[60px] appearance-none rounded-full bg-[#26a2cc] bg-[radial-gradient(circle_at_44px_16px,white_12px,transparent_13px)]" />
        Show color legend
      </label>
      <div className="mt-9 pl-20">
        <Row label="Caption" forId="caption" labelWidth="w-[195px]"><input id="caption" placeholder="Your title here" className={`${box} w-[440px]`} /></Row>
        <div className="my-[26px]">
          <Row label="Labels" labelWidth="w-[195px]">
            <div className="flex h-9 items-center">
              <label className="flex items-center gap-3"><input type="radio" name="labels" defaultChecked className={radio} />range</label>
              <label className="ml-10 flex items-center gap-3"><input type="radio" name="labels" className={radio} />custom</label>
            </div>
          </Row>
        </div>
        <Row label="Format" forId="format" labelWidth="w-[195px]"><Select id="format" value="1,000[.00]" width="w-[440px]" /></Row>
      </div>
    </form>
  );
}

export default function App() {
  return (
    <div className="flex h-screen flex-col overflow-hidden bg-[#f9f9f9]">
      <BrowserChrome />
      <div className="flex min-h-0 flex-1 font-[Roboto,sans-serif]">
        <main className="min-w-0 flex-1 overflow-hidden pt-5">
          <div className="mx-auto max-w-[2340px]">
            <Header />
            <p className="mt-[82px] flex h-10 items-center text-[28px] text-[#aaa]">This map is in <span className="ml-4 mr-3"><UserIcon /></span><b>My Charts</b></p>
            <ol className="mt-[30px] grid grid-cols-4 gap-[60px]">
              {STEPS.map((s, i) => (
                <li key={s.label}>
                  <a href="#step" className={`flex h-[100px] items-center rounded-l-lg pb-1 pl-9 text-[32px] [clip-path:polygon(0_0,calc(100%-34px)_0,calc(100%-30px)_4px,100%_50%,calc(100%-30px)_calc(100%-4px),calc(100%-34px)_100%,0_100%)] ${s.color}`}>
                    <b className="w-12 text-[52px] leading-none text-white [text-shadow:2px_2px_1px_rgba(0,0,0,0.15)]">{i + 1}</b>{s.label}
                    {s.done && <FaCheck className="ml-2.5 h-7 w-7" />}
                  </a>
                </li>
              ))}
            </ol>
            <div className="mt-[50px] flex items-start">
              <section className="w-[774px] shrink-0">
                <nav className="flex h-[76px] gap-1 border-b-2 border-[#ddd] text-[28px] text-[#2581a2]">
                  <button className="-mb-0.5 rounded-t-lg border-2 border-b-0 border-[#ddd] bg-[#f9f9f9] px-6 font-bold text-black">Refine</button>
                  <button className="rounded-t-lg border-2 border-b-0 border-[#ddd] bg-[#f4f4f4] px-6">Annotate</button>
                  <button className="rounded-t-lg border-2 border-b-0 border-[#ddd] bg-[#f4f4f4] px-6">Layout</button>
                </nav>
                <RefinePanel />
              </section>
              <section className="relative ml-[191px] mr-[132px] mt-[70px] flex-1 border-2 border-[#ddd] bg-white">
                <div className="px-5 pt-4">
                  <h1 className="text-[44px] font-bold leading-[56px]">[ Insert title here ]</h1>
                  <div className={`mt-[18px] h-[26px] w-[340px] ${GRADIENT}`} />
                  <div className="flex h-10 w-[340px] justify-between text-2xl leading-8 text-[#181818]"><span>1.7</span><span>22.5</span></div>
                </div>
                <UnemploymentMap />
                <p className="px-5 pb-4 pt-[18px] text-[22px] leading-9 text-[#888]"><a href="#data" className="text-[#1d9fcb]">Get the data</a> • Created with <a href="#datawrapper" className="text-[#1d9fcb]">Datawrapper</a></p>
                <span className="absolute bottom-4 right-3"><ResizeIcon /></span>
              </section>
            </div>
          </div>
        </main>
        <div className="w-[30px] border-l-2 border-r-2 border-[#e8e8e8] bg-[#fafafa] px-1.5 pt-1.5"><div className="h-[918px] w-4 rounded-full bg-[#c1c1c1]" /></div>
      </div>
      <button aria-label="Help center" className="fixed bottom-20 right-[110px] flex h-[120px] w-[120px] items-center justify-center rounded-full bg-[#2581a2] font-[Roboto,sans-serif] text-[64px] font-light text-white shadow-lg">?</button>
    </div>
  );
}
